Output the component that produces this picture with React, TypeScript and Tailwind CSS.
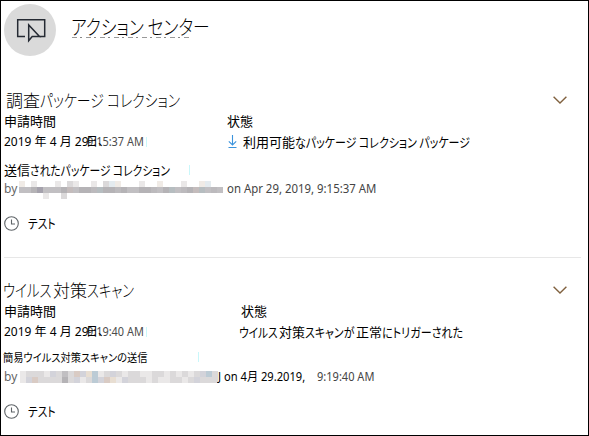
import type { ReactNode } from 'react';

const cell: Record<string, string> = {
  a: 'bg-[#b5b3b6]', b: 'bg-[#c1bfc2]', c: 'bg-[#b6bdc0]', d: 'bg-[#a5a2ac]', e: 'bg-[#c4bcbc]',
  f: 'bg-[#dbd9da]', g: 'bg-[#eae8e8]', h: 'bg-[#e4ebef]', i: 'bg-[#f0ebe6]', j: 'bg-[#d3d3da]',
  k: 'bg-[#bccbd5]', l: 'bg-[#e8ded2]', m: 'bg-[#d9cbc4]', n: 'bg-[#bcbabd]', '.': 'bg-transparent',
};

function Mosaic({ rows, className }: { rows: string[]; className: string }) {
  return (
    <div className={`flex shrink-0 flex-col ${className}`}>
      {rows.map((row, y) => (
        <div key={y} className="flex h-[6px]">
          {row.split('').map((c, x) => <span key={x} className={`flex-1 ${cell[c]}`} />)}
        </div>
      ))}
    </div>
  );
}

/** Condensed run of text: `className` carries the box width and the horizontal scale. */
function Narrow({ children, className }: { children: ReactNode; className: string }) {
  return (
    <span className={`inline-block shrink-0 ${className}`}>
      <span className="inline-block origin-left scale-x-(--sx)">{children}</span>
    </span>
  );
}

function Clock() {
  return (
    <svg className="size-[15px] shrink-0" viewBox="0 0 15 15" fill="none" stroke="#5f6468" strokeWidth="1.1">
      <circle cx="7.5" cy="7.5" r="6.8" />
      <path d="M7.5 3.5v4.5h3.5" />
    </svg>
  );
}

function Chevron() {
  return (
    <svg className="mt-[2px] ml-auto h-[8px] w-[14px]" viewBox="0 0 14 8" fill="none" stroke="#80613f" strokeWidth="1.4">
      <path d="M.6.7 7 7 13.4.7" />
    </svg>
  );
}

function Download() {
  return (
    <svg className="mt-[-1px] mr-[6px] ml-[1px] h-[13px] w-[9px] shrink-0" viewBox="0 0 9 13" fill="none" stroke="#3b93dc" strokeWidth="1.1">
      <path d="M4.5 0v10M.8 6.3l3.7 3.7 3.7-3.7M.5 12.5h8" />
    </svg>
  );
}

function Tick({ className }: { className: string }) {
  return <i className={`h-[10px] w-px shrink-0 bg-[#c9f7fa] ${className}`} />;
}

function Heading({ children, className }: { children: ReactNode; className: string }) {
  return (
    <div className={`flex h-[22px] items-center pr-[21px] text-[17px] leading-[22px] font-light ${className}`}>
      <h2 className="mt-px flex">{children}</h2>
      <Chevron />
    </div>
  );
}

function SubmittedAt({ time }: { time: string }) {
  return (
    <div className="relative flex h-full w-[223px] items-center font-['Noto_Sans','Noto_Sans_CJK_JP',sans-serif] text-[12px]">
      <span className="w-[83px]">2019 年 4 月 29</span>
      <Narrow className="w-[57px] text-[#4b4b4b] [--sx:.91]">{time}</Narrow>
      <Tick className="ml-[2px]" />
      <span className="absolute left-[82px]">日、</span>
    </div>
  );
}

function Note({ className }: { className: string }) {
  return (
    <div className={`flex h-[20px] items-center text-[13px] ${className}`}>
      <Clock />
      <Narrow className="ml-[9px] w-[28px] [--sx:.82]">テスト</Narrow>
    </div>
  );
}

export default function App() {
  return (
    <main className="flex h-[436px] w-[589px] flex-col overflow-hidden border border-black bg-white font-['Noto_Sans_CJK_JP',sans-serif] whitespace-nowrap text-black [font-feature-settings:'palt']">
      <header className="flex h-[87px] items-start pt-[3px] pl-[3px]">
        <div className="size-[52px] rounded-full bg-[#dadada] pt-[14px] pl-[12px]">
          <svg className="h-[25px] w-[30px]" viewBox="0 0 30 25" fill="none" stroke="#252a33" strokeWidth="1.5">
            <path d="M9 18.5H1.7V1.7h27v16.8h-5" />
            <path d="M12.7 7v15.7l3.5-4.2h7.3z" />
          </svg>
        </div>
        <div className="mt-[9px] ml-[15px] w-[140px]">
          <h1 className="h-[24px] text-[20px] leading-[27px] font-light">
            <Narrow className="w-[138px] [--sx:.84]">アクション センター</Narrow>
          </h1>
          <div className="ml-px h-px w-[118px] bg-[repeating-linear-gradient(90deg,#999_0_5px,transparent_5px_8px,#888_8px_10px,transparent_10px_14px)]" />
        </div>
      </header>

      <section className="h-[169px] pl-[3px]">
        <Heading className="pl-[2px]">
          調査<Narrow className="w-[142px] [--sx:.815]">パッケージ コレクション</Narrow>
        </Heading>
        <div className="flex h-[22px] items-center text-[13px]">
          <span className="w-[223px]">申請時間</span>
          <span>状態</span>
        </div>
        <div className="flex h-[20px] items-center text-[13px]">
          <SubmittedAt time="9:15:37 AM" />
          <Download />
          <span>利用可能</span>
          <Narrow className="w-[175px] [--sx:.845]">なパッケージ コレクション パッケージ</Narrow>
        </div>
        <div className="mt-[8px] flex h-[20px] items-center text-[13px] leading-[20px]">
          <span>送信</span>
          <Narrow className="w-[140px] [--sx:.83]">されたパッケージ コレクション</Narrow>
          <Tick className="ml-[19px]" />
        </div>
        <div className="flex h-[17px] items-center font-['Noto_Sans',sans-serif] text-[12px] text-[#444]">
          <span className="w-[15px] text-[#666]">by</span>
          <Mosaic className="mt-[3px] h-[18px] w-[204px]" rows={['i.g...g.fg..g.fhi...g..i...g..ih..', 'bbadbbbaebaancaanabbaanbacbnaecbnb', '....g..f..........................']} />
          <Narrow className="ml-[4px] w-[150px] [--sx:.95]">on Apr 29, 2019, 9:15:37 AM</Narrow>
        </div>
        <Note className="mt-[16px]" />
      </section>

      <hr className="mr-[7px] ml-[3px] h-px border-0 bg-[#e7e7e7]" />

      <section className="pt-[20px] pl-[3px]">
        <Heading className="">
          <Narrow className="-ml-px w-[50px] [--sx:.79]">ウイルス</Narrow>対策
          <Narrow className="w-[47px] [--sx:.78]">スキャン</Narrow>
        </Heading>
        <div className="mt-px flex h-[20px] items-center text-[13px]">
          <span className="w-[237px]">申請時間</span>
          <span>状態</span>
        </div>
        <div className="mt-px flex h-[20px] items-center text-[13px]">
          <SubmittedAt time="9:19:40 AM" />
          <Narrow className="ml-[12px] w-[40px] [--sx:.82]">ウイルス</Narrow>
          <span>対策</span>
          <Narrow className="w-[51px] [--sx:.84]">スキャンが</Narrow>
          <span>正常</span>
          <Narrow className="w-[82px] [--sx:.85]">にトリガーされた</Narrow>
        </div>
        <div className="mt-[6px] flex h-[18px] items-center text-[11px] leading-[18px]">
          <Narrow className="-ml-px w-[144px] [--sx:.93]">簡易ウイルス対策スキャンの送信</Narrow>
          <Tick className="ml-[51px]" />
        </div>
        <div className="mt-px flex h-[20px] items-center font-['Noto_Sans','Noto_Sans_CJK_JP',sans-serif] text-[12px]">
          <span className="w-[16px] text-[#666]">by</span>
          <Mosaic className="h-[12px] w-[198px]" rows={['gfffgjfbfmjlkgfjfgffggffgfgfgfjkf', 'gjmffffafjgfkjmlgjfffgfggffgfjfff']} />
          <Narrow className="w-[99px] [--sx:.93]">J on 4月 29.2019,</Narrow>
          <Narrow className="w-[58px] text-[#444] [--sx:.92]">9:19:40 AM</Narrow>
        </div>
        <Note className="mt-[14px]" />
      </section>
    </main>
  );
}
